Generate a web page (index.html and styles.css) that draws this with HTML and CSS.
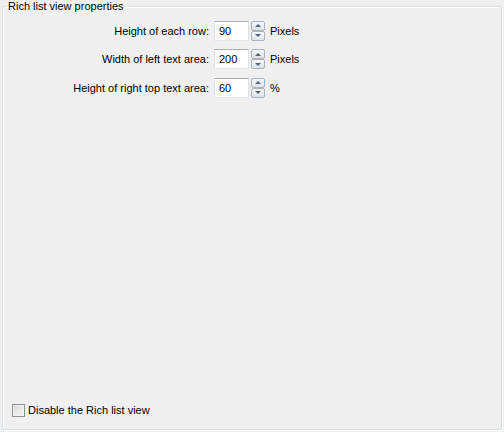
FILE: index.html
```html
<!DOCTYPE html>
<html>
<head>
<meta charset="utf-8">
<link rel="stylesheet" href="styles.css">
</head>
<body>
<fieldset class="group">
  <legend class="group-title">Rich list view properties</legend>
  <div class="form">
    <label class="lbl">Height of each row:</label>
    <div class="input">90</div>
    <div class="spin"><span class="btn up"><i></i></span><span class="btn down"><i></i></span></div>
    <span class="unit">Pixels</span>

    <label class="lbl">Width of left text area:</label>
    <div class="input">200</div>
    <div class="spin"><span class="btn up"><i></i></span><span class="btn down"><i></i></span></div>
    <span class="unit">Pixels</span>

    <label class="lbl">Height of right top text area:</label>
    <div class="input">60</div>
    <div class="spin"><span class="btn up"><i></i></span><span class="btn down"><i></i></span></div>
    <span class="unit">%</span>
  </div>
  <div class="spacer"></div>
  <label class="check"><span class="box"></span><span>Disable the Rich list view</span></label>
</fieldset>
</body>
</html>
```

FILE: styles.css
```css
html, body {
  margin: 0;
  padding: 0;
  background: #f0f0f0;
  width: 504px;
  height: 432px;
  overflow: hidden;
}
body {
  font-family: "Liberation Sans", Arial, sans-serif;
  font-size: 11px;
  color: #000;
}
.group {
  box-sizing: border-box;
  margin: 0 2px;
  width: 500px;
  height: 430px;
  padding: 0;
  border: 1px solid #d5dfe5;
  border-radius: 3px;
  box-shadow: 1px 1px 0 #fff, inset 1px 1px 0 #fff;
  display: flex;
  flex-direction: column;
}
.group-title {
  padding: 0 2px;
  margin-left: 3px;
  line-height: 13px;
}
.form {
  display: grid;
  grid-template-columns: 211px 35px 14px auto;
  grid-auto-rows: 20px;
  row-gap: 8.5px;
  align-items: center;
  margin-top: 7.5px;
}
.lbl {
  justify-self: end;
  padding-right: 5px;
}
.input {
  box-sizing: border-box;
  height: 20px;
  background: #fff;
  border: 1px solid;
  border-color: #abadb3 #dbdfe6 #e3e9ef #e2e3ea;
  padding: 3px 0 0 4px;
  line-height: 13px;
}
.spin {
  margin-left: 2px;
  width: 14px;
  height: 20px;
  display: flex;
  flex-direction: column;
}
.btn {
  box-sizing: border-box;
  height: 10px;
  border: 1px solid #a9b3bd;
  border-radius: 2px;
  background: linear-gradient(#f6f7f9, #dfe3e8);
  display: flex;
  align-items: center;
  justify-content: center;
}
.btn i {
  width: 0;
  height: 0;
  border-left: 3px solid transparent;
  border-right: 3px solid transparent;
}
.up i { border-bottom: 3px solid #4d6185; }
.down i { border-top: 3px solid #4d6185; }
.unit {
  padding-left: 7px;
}
.spacer { flex: 1; }
.check {
  display: flex;
  align-items: center;
  margin: 0 0 12px 9px;
  line-height: 13px;
}
.box {
  box-sizing: border-box;
  width: 13px;
  height: 13px;
  border: 1px solid #8e8f8f;
  background: linear-gradient(135deg, #dcdcdc, #f6f6f6);
  box-shadow: inset 0 0 0 1px #f4f4f4;
  margin-right: 3px;
}
```
